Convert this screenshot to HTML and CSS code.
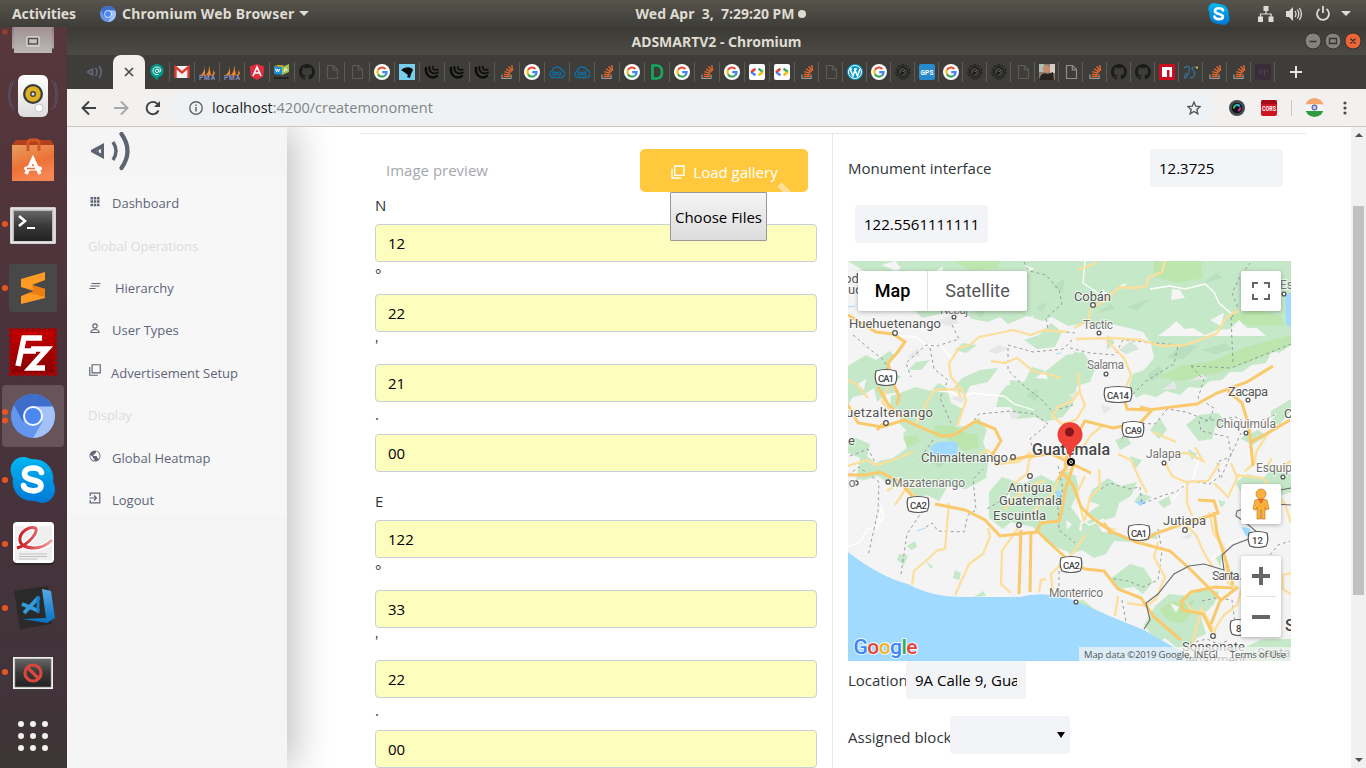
FILE: index.html
```html
<!DOCTYPE html>
<html lang="en">
<head>
<meta charset="utf-8">
<title>ADSMARTV2</title>
<link rel="stylesheet" href="styles.css">
</head>
<body>
<svg class="defs" aria-hidden="true">
  <defs>
    <linearGradient id="skyG" x2="0" y2="1"><stop stop-color="#00b7f0"/><stop offset="1" stop-color="#0078d7"/></linearGradient>
    <linearGradient id="bagG" x2=".4" y2="1"><stop stop-color="#e5a061"/><stop offset=".6" stop-color="#ee7137"/><stop offset="1" stop-color="#f68552"/></linearGradient>
    <linearGradient id="screenG" x2="0" y2="1"><stop stop-color="#666"/><stop offset=".5" stop-color="#383838"/><stop offset="1" stop-color="#222"/></linearGradient>
    <linearGradient id="metalG" x2="0" y2="1"><stop stop-color="#917b80"/><stop offset="1" stop-color="#b5b3b1"/></linearGradient>
    <linearGradient id="redG" x2="0" y2="1"><stop stop-color="#c80000"/><stop offset="1" stop-color="#850000"/></linearGradient>
    <linearGradient id="paperG" x2="0" y2="1"><stop stop-color="#fff"/><stop offset="1" stop-color="#ddd"/></linearGradient>
    <linearGradient id="codeG" x2="0" y2="1"><stop stop-color="#56a9e8"/><stop offset="1" stop-color="#0871c0"/></linearGradient>
    <linearGradient id="ribbonG"><stop stop-color="#c8141c"/><stop offset="1" stop-color="#f3a0a4"/></linearGradient>
    <clipPath id="roundClip"><circle cx="8" cy="8" r="8"/></clipPath>
  </defs>
  <symbol id="google" viewBox="0 0 16 16"><circle cx="8" cy="8" r="8" fill="#fff"/><g fill="none" stroke-width="2.2"><path d="M11.3 4.9A4.6 4.6 0 0 0 4 5.8" stroke="#ea4335"/><path d="M4 5.8A4.6 4.6 0 0 0 4 10.2" stroke="#fbbc05"/><path d="M4 10.2A4.6 4.6 0 0 0 11 11.5" stroke="#34a853"/><path d="M11 11.5A4.6 4.6 0 0 0 12.6 8.2H8.2" stroke="#4285f4"/></g></symbol>
  <symbol id="stack" viewBox="0 0 16 16"><path d="M3 10.5v4h9v-4" fill="none" stroke="#9a9b9e" stroke-width="1.2"/><path d="M4.7 12.6h6M4.8 10.3l6 .7M5.4 7.6l5.8 1.8M7.2 4.7l4.9 3.4M9.7 2.3l3.4 4.9M12.8 1l.7 5.5" stroke="#f0692b" stroke-width="1.3"/></symbol>
  <symbol id="doc" viewBox="0 0 16 16"><path d="M3.5 1.5h6l4 4v9h-10zM9.3 1.8v4h4" fill="none" stroke="currentColor" stroke-width="1.2"/></symbol>
  <symbol id="github" viewBox="0 0 16 16"><path d="M8 0C3.58 0 0 3.58 0 8c0 3.54 2.29 6.53 5.47 7.59.4.07.55-.17.55-.38v-1.49c-2.2.5-2.7-.94-2.7-.94-.36-.91-.89-1.15-.89-1.15-.7-.5.06-.49.06-.49.8.06 1.2.82 1.2.82.72 1.22 1.88.87 2.34.66.07-.52.28-.87.5-1.07C4.76 11.3 2.9 10.6 2.9 7.6c0-.87.31-1.59.82-2.15-.08-.2-.36-1.01.08-2.12 0 0 .67-.21 2.2.82a7.6 7.6 0 0 1 4 0c1.53-1.03 2.2-.82 2.2-.82.44 1.11.16 1.92.08 2.12.51.56.82 1.28.82 2.15 0 3-1.87 3.7-3.65 3.9.29.25.54.73.54 1.48v2.2c0 .22.14.46.55.38A8 8 0 0 0 8 0z" fill="#1b1b1b"/></symbol>
  <symbol id="sails" viewBox="0 0 16 16"><path d="M6 0c0 5-1 8-4 11h4zM10 1c0 4 0 7-3 10h5zM13 3c2 3 2 6 0 8h2l1-2z" fill="#f08a31"/><path d="M1 11.2h13" stroke="#c56928"/><text x="0" y="16" font-size="6.5" font-weight="700" fill="#8490c6" textLength="16">PMA</text></symbol>
  <symbol id="cloud" viewBox="0 0 16 16"><path d="M4 13.5a3.4 3.4 0 0 1-.7-6.6A5 5 0 0 1 12.8 6a3.8 3.8 0 0 1-.5 7.5z" fill="none" stroke="#126da3" stroke-width="1.4"/><path d="M7.8 9.5c-2-2.4-4-1.6-4 0s2 2.4 4 0 4-1.6 4 0-2 2.4-4 0" fill="none" stroke="#126da3" stroke-width="1.3"/></symbol>
  <symbol id="swirl" viewBox="0 0 16 16"><g fill="none" stroke="#0c0c0c" stroke-linecap="round"><path d="M2 4c-1 7 5 12 11 8" stroke-width="2.4"/><path d="M5.5 3c-1 5 3.5 8 8.5 5.5" stroke-width="1.8"/><path d="M9 2.5c-.8 2.7 2 4.5 4.8 3" stroke-width="1.5"/></g></symbol>
  <symbol id="code" viewBox="0 0 16 16"><rect width="16" height="16" rx="2" fill="#fff"/><g fill="none" stroke-width="2.4"><path d="M6.5 4.8L3.7 6.8" stroke="#ea4335"/><path d="M2 8l4.5 3.2" stroke="#4285f4"/><path d="M2 8l3-2" stroke="#ea4335"/><path d="M9.5 4.8L14 8" stroke="#34a853"/><path d="M14 8l-4.5 3.2" stroke="#fbbc05"/></g></symbol>
  <symbol id="compass" viewBox="0 0 16 16"><g fill="none" stroke="#111"><circle cx="8" cy="8" r="7" stroke-dasharray="2 .9"/><circle cx="8" cy="8" r="5"/></g><path d="M11.5 4L8.8 9 4.5 12l3-5z" fill="#111"/><path d="M8 8l2-2" stroke="#777"/></symbol>
  <symbol id="copy" viewBox="0 0 24 24"><path d="M3 7v14h14M7 3h14v14H7z" fill="none" stroke="currentColor" stroke-width="2"/></symbol>
  <symbol id="skype" viewBox="0 0 46 46"><path d="M13 0C18 0 19 2 23 2c14 0 22 11 20 23 5 9 0 20-10 21-4 0-6-2-10-2C9 44 1 33 3 21-3 11 3 0 13 0z" fill="url(#skyG)"/><path d="M31.500 15.500C30 9.500 15 9 14.500 16.500 14 25 31.500 21 31 29c-.5 7-16 6-17.500-.5" fill="none" stroke="#fff" stroke-width="5.600" stroke-linecap="round"/></symbol>
  <symbol id="chromium" viewBox="0 0 44 44"><circle cx="22" cy="22" r="22" fill="#6396ee"/><path d="M3 11a22 22 0 0 1 38 0l1 2H22L12 28z" fill="#3f6dcc"/><path d="M22 12.500h19.800A22 22 0 0 1 22 44l9.500-16z" fill="#a3c3f8"/><circle cx="22" cy="22" r="10" fill="#f4f7ff"/><circle cx="22" cy="22" r="8" fill="#4a88ef"/></symbol>
</svg>

<header class="topbar">
  <div class="top-left"><span class="activities">Activities</span><svg width="16" height="16"><use href="#chromium"/></svg><span class="app-name">Chromium Web Browser</span><i class="caret"></i></div>
  <div class="clock"><span>Wed Apr&nbsp; 3,&nbsp; 7:29:20 PM</span><i class="clock-dot"></i></div>
  <div class="tray">
    <svg class="tray-skype" width="22" height="22"><use href="#skype"/></svg>
    <svg class="tray-net" width="16" height="16" viewBox="0 0 16 16" fill="#dedbd5"><path d="M5.500 0h5v5h-5zM0 10.500h5V16H0zM10.500 10.500h5V16h-5z"/><path d="M8 5v3M2.500 11V8h10.600v3" fill="none" stroke="#dedbd5" stroke-width="1.2"/></svg>
    <svg class="tray-vol" width="16" height="16" viewBox="0 0 16 16"><path d="M0 5h3l4-4v14l-4-4H0z" fill="#dedbd5"/><path d="M9 5q2 3 0 6M11.300 3.500q3 4.500 0 9M13.400 2q4 6 0 12" stroke="#dedbd5" stroke-width="1.3" fill="none"/></svg>
    <svg class="tray-power" width="16" height="16" viewBox="0 0 16 16"><path d="M4.500 3a6 6 0 1 0 7 0M8 0v7" fill="none" stroke="#dedbd5" stroke-width="1.800"/></svg>
    <i class="caret"></i>
  </div>
</header>

<div class="desktop">
<nav class="dock">
  <svg class="dock-first" viewBox="0 27 67 37"><circle cx="5" cy="32" r="2.800" fill="#963f2d"/><path d="M12 27h42v22l-2-1v5H14v-5l-2 1z" fill="url(#metalG)"/><path d="M14 27h38v26H14z" fill="#c9c4c4" opacity=".3"/><rect x="26" y="36" width="14" height="11" rx="2" fill="#d0cac8"/><rect x="28.500" y="38.500" width="9" height="5.500" fill="#c7c1c0" stroke="#514b4c" stroke-width="1.400"/></svg>
  <svg viewBox="0 0 67 64"><g fill="none" stroke="#5b6a99" opacity=".55"><path d="M14 16q-8 15 0 30M11 18q-5 13 0 26M52 16q8 15 0 30M55 18q5 13 0 26"/></g><rect x="18" y="11" width="30" height="42" rx="6" fill="url(#paperG)"/><circle cx="33" cy="30" r="10" fill="#3b3b3b"/><circle cx="33" cy="30" r="7.700" fill="#dfb222"/><circle cx="33" cy="30" r="3" fill="#444"/><circle cx="33" cy="30" r="1.500" fill="#ddd"/><circle cx="39" cy="44" r="4" fill="#fff" stroke="#c7c7c7"/></svg>
  <svg viewBox="0 0 67 64"><path d="M12 17l4-5h35l3 5z" fill="#b3401c"/><path d="M12 17h42v36H12z" fill="url(#bagG)"/><path d="M28 23v-8q0-3 3-3h5q3 0 3 3v8" fill="none" stroke="#d35522" stroke-width="3"/><path d="M26 46l7-15 7 15M27 40h12" fill="none" stroke="#fff" stroke-width="3.600"/><rect x="24" y="38.500" width="18" height="4" rx="2" fill="#fff"/><path d="M27 40.500h8" stroke="#ef6b2e" stroke-width="1.500"/></svg>
  <svg viewBox="0 0 67 64"><circle cx="5" cy="32" r="3" fill="#e95420"/><rect x="10" y="15" width="46" height="37" rx="1.500" fill="#bcbcbc"/><rect x="11.500" y="16.500" width="43" height="34" fill="none" stroke="#e4e4e4" stroke-width="2"/><rect x="14" y="19" width="38" height="30" fill="url(#screenG)"/><path d="M19 24l6 5-6 5" fill="none" stroke="#fff" stroke-width="2.500"/><path d="M27 36h8" stroke="#fff" stroke-width="2"/></svg>
  <svg viewBox="0 0 67 64"><circle cx="5" cy="32" r="3" fill="#e95420"/><rect x="9" y="8" width="48" height="48" rx="3" fill="#484848"/><path d="M45 16v8l-13 5 13 4v9L21 48v-8l13-5-13-4v-8z" fill="#ff9a24"/><path d="M32 29l13 4v8L29 37l5-2z" fill="#ea7e12"/></svg>
  <svg viewBox="0 0 67 64"><rect x="11" y="10" width="44" height="44" fill="url(#redG)"/><rect x="11" y="10" width="44" height="44" fill="none" stroke="#ad0000" stroke-width="4.500" stroke-dasharray="0 5.500" stroke-linecap="round"/><path d="M18 46l6-28h18M21 31h15M31 29h16L30 48h15" fill="none" stroke="#fff" stroke-width="5.500"/></svg>
  <svg viewBox="0 0 67 64"><rect x="2" y="1" width="62" height="62" rx="4" fill="#66545a"/><circle cx="5" cy="28" r="3" fill="#e95420"/><circle cx="5" cy="36.500" r="3" fill="#e95420"/><use href="#chromium" x="11" y="10" width="44" height="44"/></svg>
  <svg viewBox="0 0 67 64"><circle cx="5" cy="32" r="3" fill="#e95420"/><use href="#skype" x="10" y="9" width="46" height="46"/></svg>
  <svg viewBox="0 0 67 64"><circle cx="5" cy="32" r="3" fill="#e95420"/><rect x="13" y="11" width="41" height="42" rx="4" fill="#292326"/><rect x="13" y="10" width="41" height="41" rx="4" fill="#fff"/><path d="M15 14h37v34H15z" fill="#efefef"/><path d="M17 36c12-3 23-18 18-20s-14 3-15 10 6 10 14 10 14-4 18-8" fill="none" stroke="#fff" stroke-width="6"/><path d="M17 36c12-3 23-18 18-20s-14 3-15 10 6 10 14 10 14-4 18-8" fill="none" stroke="url(#ribbonG)" stroke-width="3"/><path d="M19 42h28M19 44.500h28M19 47h18" stroke="#c2c2c2"/></svg>
  <svg viewBox="0 0 67 64"><circle cx="5" cy="32" r="3" fill="#e95420"/><path d="M14 15l34-5 4 38-32 5z" fill="#2a2a2b"/><path d="M42 13l9 2 4 27-8 5-25-4 24-1z" fill="url(#codeG)"/><path d="M22 28l17 7M24 37l15-16" stroke="#329bdd" stroke-width="4"/><path d="M38 20v17" stroke="#137fc8" stroke-width="3"/></svg>
  <svg viewBox="0 0 67 64"><circle cx="5" cy="32" r="3" fill="#e95420"/><rect x="13" y="17" width="40" height="32" fill="#efefed"/><rect x="15" y="19" width="36" height="28" fill="url(#screenG)" stroke="#777" stroke-width=".7"/><g fill="none" stroke="#d9473e" stroke-width="3.200"><circle cx="33" cy="33" r="8"/><path d="M27.500 27.500l11 11"/></g></svg>
  <svg viewBox="0 0 67 64" fill="#f2f1f0"><circle cx="21" cy="20" r="3"/><circle cx="33" cy="20" r="3"/><circle cx="45" cy="20" r="3"/><circle cx="21" cy="32" r="3"/><circle cx="33" cy="32" r="3"/><circle cx="45" cy="32" r="3"/><circle cx="21" cy="44" r="3"/><circle cx="33" cy="44" r="3"/><circle cx="45" cy="44" r="3"/></svg>
</nav>

<section class="window">
  <div class="titlebar"><span class="title">ADSMARTV2 - Chromium</span>
    <svg class="winbtns" width="58" height="20" viewBox="0 0 58 20"><circle cx="9" cy="10" r="8" fill="#85837d" stroke="#33322e"/><circle cx="29" cy="10" r="8" fill="#85837d" stroke="#33322e"/><circle cx="49" cy="10" r="8" fill="#ed6536" stroke="#33322e"/><path d="M5.500 10.500h7M25.500 7.500h7v5h-7zM46.500 7.500l5 5m0-5l-5 5" fill="none" stroke="#343331" stroke-width="1.300"/></svg>
  </div>
  <div class="tabs">
    <div class="tab first"><svg width="18" height="16" viewBox="0 0 18 16" fill="none" stroke="#626978" stroke-width="1.600"><path d="M6.500 5v6L1.500 8zM9.500 4q3 4 0 8M13 2q4.500 6 0 12"/></svg></div>
    <div class="tab active"><svg width="10" height="10" viewBox="0 0 10 10"><path d="M1 1l8 8m0-8L1 9" stroke="#4b4b4b" stroke-width="1.700"/></svg></div>
    <div class="tab"><svg viewBox="0 0 16 16"><path d="M8 0a6.800 6.800 0 0 1 1 13.500V16C5 14 1.200 11 1.200 6.800A6.800 6.800 0 0 1 8 0z" fill="#009688"/><circle cx="8" cy="6.800" r="1.700" fill="none" stroke="#fff"/><path d="M9.700 5v2q.2 1.800 1.500.8C13 5 10 2.800 8 3 4 3 3 7 5 9.500q2 2 4.500.8" fill="none" stroke="#fff"/></svg></div>
    <div class="tab"><svg viewBox="0 0 16 16"><path d="M1 2h14v12H1z" fill="#f2f2f2"/><path d="M1.500 14V3L8 8.500 14.500 3v11" fill="none" stroke="#db3c31" stroke-width="2.400"/></svg></div>
    <div class="tab"><svg><use href="#sails"/></svg></div>
    <div class="tab"><svg><use href="#sails"/></svg></div>
    <div class="tab"><svg viewBox="0 0 16 16"><path d="M8 0l7.300 2.500-1 10L8 16l-6.300-3.500-1-10z" fill="#e02c3c"/><path d="M4 12l4-9 4 9M5.600 9h4.800" fill="none" stroke="#fff" stroke-width="1.700"/></svg></div>
    <div class="tab"><svg viewBox="0 0 16 16"><path d="M0 2l8 1v8l-8-1z" fill="#218dd1"/><path d="M8 3l7-3v8l-7 3z" fill="#9cc44f"/><path d="M0 2l5-1 5 .5-2 1.500z" fill="#e7bb34"/><path d="M1.500 4.500l1 3 1-2.500 1 3 1-3" fill="none" stroke="#fff"/><path d="M10 8l1.500-4L13 7" fill="none" stroke="#fff"/><path d="M0 14h15" stroke="#1f1f1f" stroke-width="2" stroke-dasharray="2 .5"/></svg></div>
    <div class="tab"><svg><use href="#github"/></svg></div>
    <div class="tab dim"><svg><use href="#doc"/></svg></div>
    <div class="tab dim"><svg><use href="#doc"/></svg></div>
    <div class="tab"><svg><use href="#google"/></svg></div>
    <div class="tab"><svg viewBox="0 0 16 16"><path d="M0 0h16v16H0z" fill="#76cdec"/><path d="M2 6l3-2q7-2 9 2l-2 4-1 4-3-1 1-2-4-3z" fill="#0b0c0d"/></svg></div>
    <div class="tab"><svg><use href="#swirl"/></svg></div>
    <div class="tab"><svg><use href="#swirl"/></svg></div>
    <div class="tab"><svg><use href="#swirl"/></svg></div>
    <div class="tab"><svg><use href="#stack"/></svg></div>
    <div class="tab"><svg><use href="#google"/></svg></div>
    <div class="tab"><svg><use href="#cloud"/></svg></div>
    <div class="tab"><svg><use href="#cloud"/></svg></div>
    <div class="tab"><svg><use href="#stack"/></svg></div>
    <div class="tab"><svg><use href="#google"/></svg></div>
    <div class="tab"><svg viewBox="0 0 16 16"><path d="M3.500 1.500H8q5 .5 5 6.500t-5 6.500H3.500z" fill="none" stroke="#19a75f" stroke-width="2.700"/></svg></div>
    <div class="tab"><svg><use href="#google"/></svg></div>
    <div class="tab"><svg><use href="#stack"/></svg></div>
    <div class="tab"><svg><use href="#google"/></svg></div>
    <div class="tab"><svg><use href="#code"/></svg></div>
    <div class="tab"><svg><use href="#code"/></svg></div>
    <div class="tab small"><svg><use href="#stack"/></svg></div>
    <div class="tab small dim"><svg><use href="#doc"/></svg></div>
    <div class="tab small"><svg viewBox="0 0 16 16"><circle cx="8" cy="8" r="8" fill="#0999c7"/><circle cx="8" cy="8" r="6.500" fill="none" stroke="#fff"/><path d="M3 5l3 7 2-6 2.500 6L13 5M3 5h2M7 5h3" fill="none" stroke="#fff" stroke-width="1.500"/></svg></div>
    <div class="tab small"><svg><use href="#google"/></svg></div>
    <div class="tab small"><svg><use href="#compass"/></svg></div>
    <div class="tab small"><svg viewBox="0 0 16 16"><rect width="16" height="16" rx="2" fill="#278bcb"/><text x="1.500" y="10.500" font-size="6.500" font-weight="700" fill="#fff" textLength="13">GPS</text></svg></div>
    <div class="tab small"><svg><use href="#google"/></svg></div>
    <div class="tab small"><svg><use href="#compass"/></svg></div>
    <div class="tab small"><svg><use href="#compass"/></svg></div>
    <div class="tab small dim"><svg><use href="#doc"/></svg></div>
    <div class="tab small"><svg viewBox="0 0 16 16"><path d="M0 0h16v16H0z" fill="#8a7a6b"/><path d="M0 0h5v8H0z" fill="#a9c0b3"/><path d="M11 0h5v9h-5z" fill="#d6cfc6"/><circle cx="7.500" cy="5" r="3.700" fill="#cb8a6b"/><path d="M0 16q2-9 9-6l5-2 1 8z" fill="#292320"/></svg></div>
    <div class="tab small light"><svg><use href="#doc"/></svg></div>
    <div class="tab small"><svg><use href="#stack"/></svg></div>
    <div class="tab small"><svg><use href="#github"/></svg></div>
    <div class="tab small"><svg><use href="#github"/></svg></div>
    <div class="tab small"><svg viewBox="0 0 16 16"><path d="M0 0h16v16H0z" fill="#cc0d20"/><path d="M3 3h10v10h-2.500V6H8v7H3z" fill="#fff"/></svg></div>
    <div class="tab small"><svg viewBox="0 0 16 16" fill="none" stroke="#3a6f92" stroke-width="1.300"><path d="M1 4q3-3 5-1c2 2-2 11-4 11q-2-1 2-5M14 4q-5-2-5 1 4 3 2 7-2 3-4 1"/><path d="M13 3.500h2" stroke="#e4b33c" stroke-width="2"/></svg></div>
    <div class="tab small"><svg><use href="#stack"/></svg></div>
    <div class="tab small"><svg><use href="#stack"/></svg></div>
    <div class="tab small"><svg viewBox="0 0 16 16"><rect width="16" height="16" rx="2" fill="#3a2c39"/><path d="M4.500 5v5M7 5v5M9.500 5v7M12 5v4" stroke="#514151"/></svg></div>
    <svg class="newtab" width="12" height="12" viewBox="0 0 12 12"><path d="M6 0v12M0 6h12" stroke="#e8e6e3" stroke-width="2"/></svg>
  </div>
  <div class="toolbar">
    <svg class="navbtn" width="16" height="16" viewBox="0 0 16 16"><path d="M15 8H2M8 1.500L1.500 8 8 14.500" fill="none" stroke="#3f4043" stroke-width="1.900"/></svg>
    <svg class="navbtn" width="16" height="16" viewBox="0 0 16 16"><path d="M1 8h13M8 1.500L14.500 8 8 14.500" fill="none" stroke="#a6a6a6" stroke-width="1.900"/></svg>
    <svg class="navbtn" width="16" height="16" viewBox="0 0 16 16"><path d="M13.500 10.500A6.200 6.200 0 1 1 12.500 4L14 5.500" fill="none" stroke="#3f4043" stroke-width="1.900"/><path d="M15 1v6H9z" fill="#3f4043"/></svg>
    <div class="omnibox">
      <svg width="14" height="14" viewBox="0 0 14 14"><circle cx="7" cy="7" r="6.200" fill="none" stroke="#5f6368" stroke-width="1.400"/><path d="M7 6v4.500M7 3.400V5" stroke="#5f6368" stroke-width="1.500"/></svg>
      <span class="url"><b>localhost</b>:4200/createmonoment</span>
      <svg class="star" width="14" height="14" viewBox="0 0 14 14"><path d="M7 1l1.700 4.200 4.600.3-3.500 3 1.100 4.400L7 10.500l-3.900 2.400 1.100-4.400-3.500-3 4.600-.3z" fill="none" stroke="#505256" stroke-width="1.300"/></svg>
    </div>
    <svg class="ext1" width="16" height="16" viewBox="0 0 16 16"><circle cx="8" cy="8" r="8" fill="#454a50"/><circle cx="8" cy="8" r="5.200" fill="#111"/><g fill="none" stroke-width="2"><path d="M5 8.500A3 3 0 0 1 7 5.200" stroke="#28c26b"/><path d="M7 5.200a3 3 0 0 1 3.700 1.200" stroke="#26b7dd"/><path d="M11 7.500a3 3 0 0 1-2 3.400" stroke="#d42ea4"/></g></svg>
    <svg class="ext2" width="16" height="16" viewBox="0 0 16 16"><rect width="16" height="16" rx="2" fill="#cf1422"/><path d="M0 2q0-2 2-2h12q2 0 2 2v2H0z" fill="#a70b17"/><text x="1" y="11" font-size="7" font-weight="700" fill="#fff" textLength="14" lengthAdjust="spacingAndGlyphs">CORS</text></svg>
    <i class="sep"></i>
    <svg class="flag" width="19" height="19" viewBox="0 0 16 16"><g clip-path="url(#roundClip)"><path d="M0 0h16v6H0z" fill="#f5a46a"/><path d="M0 5.300h16v5.600H0z" fill="#f4f4f4"/><path d="M0 10.900h16V16H0z" fill="#2e9b41"/></g><circle cx="8" cy="8" r="2" fill="#c3c8e3" stroke="#5b6bb0"/></svg>
    <svg class="kebab" width="4" height="14" viewBox="0 0 4 14" fill="#4a4b4e"><circle cx="2" cy="2" r="1.600"/><circle cx="2" cy="7" r="1.600"/><circle cx="2" cy="12" r="1.600"/></svg>
  </div>

  <div class="page">
    <aside class="sidebar">
      <div class="brand"><svg width="40" height="40" viewBox="0 0 40 40" fill="none" stroke="#5c6470"><path d="M14 11v16L1 20v-2z" fill="#5c6470" stroke="none"/><path d="M11 17v4.500L6.500 19z" fill="#f5f5f5" stroke="none"/><path d="M8 15v8" stroke="#5c6470" stroke-width="1.400"/><path d="M23 10q6 9 0 18" stroke-width="3.400"/><path d="M31.500 2q12 17 0 34" stroke-width="4.200" stroke-linecap="round"/></svg></div>
      <ul class="menu">
        <li><svg viewBox="0 0 12 12"><path d="M1.500 3.200h9M1.500 6.600h9M1.500 10h9" stroke="#5f6577" stroke-width="2.500" stroke-dasharray="2.500 .75"/></svg><span>Dashboard</span></li>
        <li class="head"><span>Global Operations</span></li>
        <li class="hier"><svg viewBox="0 0 12 12" stroke="#5f6577" stroke-width="1.200"><path d="M2.500 3.500h9M1.500 6h9M.5 8.500h6"/></svg><span>Hierarchy</span></li>
        <li class="user"><svg viewBox="0 0 12 12" stroke="#5f6577" stroke-width="1.200" fill="none"><circle cx="6" cy="4" r="2.200"/><path d="M2 10.500q0-3 4-3t4 3z"/></svg><span>User Types</span></li>
        <li class="adv"><svg class="big"><use href="#copy"/></svg><span>Advertisement Setup</span></li>
        <li class="head disp"><span>Display</span></li>
        <li class="heat"><svg viewBox="0 0 12 12"><circle cx="6" cy="6" r="5.500" fill="#5f6577"/><path d="M1.500 5l2.500 2v1l1.500 1.500v1.300A5 5 0 0 1 1.400 5zM7 1.300V3L5.500 3.500v1.200H4L4.500 6h3l1 1.500.3 1.300h1A5 5 0 0 0 7 1.300z" fill="#f7f7f7"/></svg><span>Global Heatmap</span></li>
        <li class="out"><svg viewBox="0 0 12 12" fill="none" stroke="#5f6577" stroke-width="1.200"><path d="M1.200 4V1.200h9.600v9.600H1.200V8M.5 6h6.800M5 3.500L7.500 6 5 8.500"/></svg><span>Logout</span></li>
      </ul>
    </aside>
    <main class="content">
      <div class="left-col">
        <div class="preview-row">
          <span class="preview">Image preview</span>
          <div class="upload">
            <button class="load"><svg width="16" height="16"><use href="#copy"/></svg><span>Load gallery</span><i class="stripe"></i></button>
            <button class="choose">Choose Files</button>
          </div>
        </div>
        <div class="label-n">N</div>
        <input class="field" value="12">
        <div class="mark">°</div>
        <input class="field" value="22">
        <div class="mark">'</div>
        <input class="field" value="21">
        <div class="mark">.</div>
        <input class="field" value="00">
        <div class="label-e">E</div>
        <input class="field" value="122">
        <div class="mark">°</div>
        <input class="field" value="33">
        <div class="mark">'</div>
        <input class="field" value="22">
        <div class="mark">.</div>
        <input class="field" value="00">
      </div>
      <div class="right-col">
        <div class="mon-row"><label class="mon">Monument interface</label><input class="grey lat" value="12.3725"></div>
        <input class="grey lng" value="122.5561111111">
        <div class="map">
          <svg class="map-art" width="443" height="400" viewBox="848 261 443 400">
            <path d="M848 261h443v400H848z" fill="#f4f4f4"/>
            <g fill="#c5e8c8">
              <path d="M848 261h443v84l-12 8-7-2-6 12-14 2-10 7-12 0-8 8-12 1-9 7-12-1-9 8-14-4-10 6-12-3-8 4-7-12 4-12 11-4 10-12-3-14-8-12-14-4-18-4-8 5-17-6-18 3-16-9-9 4-16-5-19 8-8-7-12 5-16-3-10-8-18 2-22 5-8-8-18-8-14-20z"/>
              <path d="M848 366l18-11 10 5 14-9 5 5-7 10 4 9 9 1-7 8 5 8-13 2-9 8-3-14-11 7-10 2-5 8zM848 440l8-2 14 6-3 12 9 8-6 14-14 2 4-22-12-5z"/>
              <path d="M891 396l25-9 14 4 9-8 8 5 4 15 12 6-4 14-12 10-13-4-15 8-12-6-9-9 9-8-17-8zM903 432l26-8 14 3 22-1 14-8 8 12-4 12 6 16-3 20-20 11-18-3-9 15-12-6-13 6-6-14-18-2-12-9-17 5 8-11 10-9 14-3 14-10z"/>
              <path d="M952 390l10-12 18-8 18-2-10 14-18 4-4 8zM999 395l12-15 13 2 8-15 14 4 20-16 17-3 12 17-5 13-13 4-4 18-10 13-18 5-10-5-18 2-6-12-15 0zM1024 340l15-5 12-12 11 9-7 15-18 2z"/>
              <path d="M989 492l13-15 21 7 18-9 13 7 10-12 12 6 3 15-8 16 10 14-4 16-12 14-18-8-14-16-22-5-8 7-14-11z"/>
              <path d="M1060 534l10-10 13 8 4 17-17 5-10-9zM1092 490l16-12 12 8 17-4-6 14-12 7-4 14-15 4-12-8 12-8-12-4zM1082 524l12-6 8 14 18 1 11 9-17-1-8 13-12 4-12-8zM1118 573l12-9 14 4 9 14-10 12-9-7-15 2-9-10zM1140 493l12 4-10 7-8-2z"/>
              <path d="M1155 606l14-12 19 2 16-8 15 4-5 12-13 13 5 17-9 4-8 11-12-1-12-10-7 5-14-18zM1242 649l20-10 29 0v22h-53zM1235 483l12-9 16 4 9-9 19 5v18l-18 6-15-3-13 2zM1271 411l20-12v12l-12 14-8-3zM1186 425l13-10 19-2 10 11-13 3-3 12-13 2zM1150 430l10-12 7 12-8 9zM1240 438l18-8 9 6-15 9z"/>
              <path d="M907 546l8-5 2 6-6 3zM899 554l9 1-4 10-7-5zM955 570l6 3-2 7-6-2zM974 597l9-6 3 5zM925 560l8 7-2 2zM1158 502l11-6 2 8-7 4zM1218 500l8 2-5 6zM1216 558l7-5-3 14z"/>
              <path d="M1145 538l10-7 3 8zM1115 440l12-4 4 8-11 6zM1130 456l12 4-7 10zM1188 449l9 5-5 6zM1107 335l8 7-8 8zM1074 351l9 4-8 9zM908 370l8-8 14-2-9 10zM955 350l8-7 14 2-11 8zM920 402l9-5 5 9z"/>
            </g>
            <g fill="#b9e6a6" opacity=".75">
              <path d="M1154 261h47l2 17-24 5-25-6zM1158 377l25-12 30-4 32-14 46-12v10l-46 19-28 9-36 8zM1230 315l27-5 24 6 3 9-31 1-23-5zM1159 610l12-9 15 2 5 11-8 9-12-1zM935 425l19 1 14 8 10 0v14l-13 3-17-12-13-2zM955 261h45l-3 7-27 3zM903 437l13-2 4 6-13 7zM1070 602l13-2 14 11-10-1z"/>
            </g>
            <g fill="#f5f5f5">
              <path d="M1158 336l12-9 6-6 9 8 8-1 12 7 12-5 13-1 9-9 8 8 10 0 9 8zM882 265l13-4 6 7-5 3zM862 271l16 9-3 7-12-5zM935 272l8-6-2 13zM1172 289l8 1 5 8-14 2zM1025 265l10 4-7 2zM1210 320l14-7-3 13zM1027 320l6-5-1 12zM1120 285l7-2-4 6z"/>
              <path d="M858 384l8-5-2 11zM1035 378l10-7 3 8zM999 385l10-10 1 10zM890 484l8-7 5 8zM1100 528l7-4 2 8zM1170 603l9 4-3 6zM1001 500l8-8 2 9zM1243 489l11-4-1 7zM1066 520l6 4-5 6z"/>
            </g>
            <g fill="#a9d7b4" opacity=".45"><path d="M862 291l18-5 8 7-13 4zM905 289l20-12 10 2-20 14zM986 300l9-10 14-1-8 10zM1011 283l19-9-8 14zM1096 313l15-9 4 5zM1127 307l22-8-12 12zM1119 350l12-9 8 8-13 5zM1166 358l18-14 14 2-15 13zM1202 350l22-7 9 6-18 5zM1148 374l11-8 4 8-12 7zM972 309l14 2-5 7zM1203 283l14-10 6 5zM1235 285l15-6 8 9zM1052 287l13-9-2 14zM950 285l11-7 4 6zM1035 308l12-6-5 10zM930 462l17-3-7 9zM1026 395l12-6-2 13zM1180 603l15-3-5 8z"/></g>
            <g fill="#e6e8e7"><path d="M938 320l16-5 5 8-12 3zM906 358l12-10 2 8zM988 351l10-6 11 3-12 6zM950 398l19-4-7 9zM1008 410l13 5-9 5zM1068 395l11-4-3 9zM1162 390l12-9 3 8zM1190 381l12-7 6 5zM1180 538l14-6-4 7zM1100 404l12 4-8 6z"/></g>
            <g fill="#a0daff">
              <path d="M848 552q32 25 60 32 25 14 60 13h52q25-7 56 4 34 16 68 29l54 31H848z"/>
              <path d="M930 447l8-5 16-1 4 4-1 9-8 4-7-3-10 2zM1285 295l6-3v36l-5-4zM1136 502l6-3 4 4-6 3zM1241 527l8 1 4 7-7 1zM1055 491l5 0 2 6-4 3z"/>
              <path d="M848 307l7-1M1056 354l5-1M917 531l8-3" stroke="#a0daff" fill="none"/>
            </g>
            <g fill="none" stroke="#fff" stroke-width="1.300">
              <path d="M900 336l16 1 10 8 14 0 11 13M932 390l18 2 13 5 10-4 16 2 15 1 10 8 20 6M848 547l12-5 7-13 11-1 3-20M1085 261l-2 22 15 10 9 0M1150 289l20-3 15 3 20-5 9 8 5 11 14 12M1266 425l10-11M1077 495l3 22 9 8 15-6M1127 540l8-9M1172 500l15-17 6-4 6-20M1211 560l12-12 20-11M881 505l3 12-8 9"/>
            </g>
            <g fill="none" stroke="#8e9394" stroke-width=".9" stroke-dasharray="3 3">
              <path d="M1024 262l5 9 17 4 13 15 3 14-16 14 2 12 27 3M952 325l7 14-22 7-11-1-20 18 5 14M930 348l4 21 14 11-8 18 11 25M853 335l19 16 12 9 7 19M1008 345l25 7 30-3 9-9M1008 348v22l14 14 20 16 10 11 21-6M970 425l9-11 32-3 23 3 14 10-18 15 5 20M850 456l18-7 8 15M848 475l11-8 20 15-1 29-10 45M933 440l-14 20M901 574l6-40 18-27-8-4M926 527l6-4 6 8 26 1 4-17 8-5-3-31 10-10M1012 488l-8 11-19 11M1058 466l5 23-5 18 1 23 16 13M1059 565v28"/>
              <path d="M1070 348l20 5 25 2 8-15 55 5-4 19-28 17-21 21M1191 366l40 2 20-8 40-16M1191 366l13 14-6 18 16 10-5 13-23-9-19-3-12 15-25-1-10 19M1231 317l2 47M1232 317l6-9-6-15 8-16 10-14M1199 421l2 10 27 6 3 17-10 24M1205 421l31-4 14 8 25-10M1101 489l9-6 19 6 11-2 2 17 22-9 12-3 15-11 19 3 10-8-3-14 13-5 11-24M1158 529l4 22-4 29-15 7-15-6-20-3M1122 600l4 22M1202 601l14-3 16 2 4 31M1270 555l8-10 12-4M1190 643l17-4 11 5 9-3"/>
            </g>
            <g fill="none" stroke="#fcdf9c" stroke-width="2.300">
              <path d="M1078 270l18-7M1165 261l-3 11-14 6-1 7-10 3-17-1-20 17-8 1-4 16-14 7M1076 339l37-1 28 2 20 6 24-1 20-7 12-5 9-15 12-8M1106 340l18 18 7 17-6 15-11 8M1067 332l-23-2-13 5-18-5-14 3-20 4-9 8-11 3-10 15 2 14 12 14 3 10-9 25M934 390l23-1 4 9M934 390l-15 27-3 9M991 361l14 2 12-5 16 13 18 4 10 3M1078 373l2 20 5 12-9 15-14 4-10-8M1052 416l6-9 14-6 8-10M888 387l-6 15 8 8M848 380l8 4 12 14M848 466l19-6 9 5 17-5 20-8M895 505l10-15 13-7M887 491l13-9 15 14M949 503l-4 46-7 1-9 8-15 13-2 14M988 528l2 9-7 17-14 10-14 31M1018 528l-16 23-1 33 10 9M1046 579l-5 1-2 12"/>
              <path d="M979 454l8-4 8 5 3 9 20-2 13-10M1004 510l9-11 23-16 9-2M1028 520l10-14 14-11 9-22 8-4M1053 594l-2-20 22-21 12-18M1043 450l-14 10-2 14-14 10M1085 476l-8 17 7 29M1060 457l23-10 8-12 12-10M1147 493l-8-15-8-18-13-6M1176 442l-23-10M1172 454l15-1 16 8-8-14M1291 461l-13 9-10-5 4-7M1164 460l8 16 14 6 22-1 12-18M1187 482v21l5 13M1231 463l6 15-9 19-14-14M1209 512l5 22 10 14 4 35 8 4M1186 525l10 10 9 20 8 12M1158 542l-4 15 11 20-9 22-10 7M1148 606l-21-3M1118 596l-3 20M1202 607l-13 49M1242 588l-5 17-13 10-9 14 0 10M1213 629l-10-18-10 1-7-10M1291 594l-8-5v-14l8-2M1280 425l-11 7-13 20-1 11-10 8M1235 475l28 3 9 10 13 16 6 19M1085 520l5-23 10-9-1-19M1116 530l-17-5"/>
            </g>
            <g fill="none" stroke="#f9c96b" stroke-width="3">
              <path d="M848 315l28 17 17 2 12 8-8 11-9 10 5 20 6 13-2 9M848 405l10 18 24 4 22-7 16 7 21 9 13-1 22-14 19 8 6 12-9 14 5 11M878 387l10 17 14 14M877 430l8-8M848 475l18 0 14-3 20 10 18 21M935 504l30 6 20 10 15 16 36-4 5-9 18-2 3-12 3-18 8-25M1031 532l-1 60M1021 530l-2 64M1036 530l19 18 18 16 12 5 19 2 14 18 23 9 13 19 27 23M1061 471l12 14 8 22 10 10 21 15 24 10 34 9 20 18 14 14 17 17M1111 534l-7-11M1124 397l3 12 21 1 32-4 17-2 20-11 30-11 26-16M1228 391l14 12 7 23 4 40M1140 407l12 3-12 13-27 5-28-7-17 28-3 17M1145 540l12-7 20-7 32-10 9-3-4-12-16-1M1214 512l3 21 9 28 7 24M1251 442l15-8 24-14M1233 588l-18-1-24 5-10 10 2 8 20 4 9 18M1238 587l-18 14-9 23M1068 462l23 11M1058 480l11-18-18-8-20 2-22 4"/>
            </g>
            <path d="M1144 629l6-9-4-17 12-9 16-20 15-8 15-2 20 6-2-15 11-10 21-8 3-5-12-10-9-6 1-5 12-4 4-17M1291 488l-16 3v13l16 1" fill="none" stroke="#68696a" stroke-width="1.100"/>
            <g fill="#fff" stroke="#555" stroke-width="1.300"><circle cx="895" cy="333" r="2.300"/><circle cx="954" cy="317" r="1.900"/><circle cx="886" cy="423" r="2.300"/><circle cx="1013" cy="457" r="2.300"/><circle cx="888" cy="482" r="2"/><circle cx="856" cy="483" r="2"/><circle cx="1030" cy="476" r="2.300"/><circle cx="1019" cy="525" r="2.300"/><circle cx="1093" cy="305" r="2.300"/><circle cx="1099" cy="333" r="1.900"/><circle cx="1106" cy="374" r="1.900"/><circle cx="1248" cy="400" r="1.900"/><circle cx="1246" cy="433" r="1.900"/><circle cx="1164" cy="463" r="1.900"/><circle cx="1185" cy="530" r="2.300"/><circle cx="1283" cy="477" r="1.900"/><circle cx="1284" cy="294" r="1.900"/><circle cx="1213" cy="636" r="2.300"/><circle cx="1076" cy="602" r="1.900"/></g>
            <g class="shields" fill="#fff" stroke="#555" stroke-width="1.200"><path d="M876 371q10-3 20 0 2 8-1 13-9 3-18 0-3-6-1-13z"/><path d="M1105 388q13-3 26 0 2 8-1 13-12 3-24 0-3-6-1-13z"/><path d="M1123 423q10-3 20 0 2 8-1 13-9 3-18 0-3-6-1-13z"/><path d="M908 498q10-3 20 0 2 8-1 13-9 3-18 0-3-6-1-13z"/><path d="M1061 558q10-3 20 0 2 8-1 13-9 3-18 0-3-6-1-13z"/><path d="M1129 526q10-3 20 0 2 8-1 13-9 3-18 0-3-6-1-13z"/><path d="M1249 533q9-3 18 0 2 8-1 13-8 3-16 0-3-6-1-13z"/><path d="M1231 621q7-3 14 0 2 8-1 13-6 3-12 0-3-6-1-13z"/></g>
            <g class="shield-text"><text x="878" y="381.500" textLength="16">CA1</text><text x="1107" y="398.500" textLength="22">CA14</text><text x="1125" y="433.500" textLength="17">CA9</text><text x="910" y="508.500" textLength="17">CA2</text><text x="1063" y="568.500" textLength="17">CA2</text><text x="1131" y="536.500" textLength="16">CA1</text><text x="1252" y="543.500" textLength="11">12</text><text x="1236" y="631.500">8</text></g>
            <g class="labels">
              <text x="844" y="283">oda</text><text x="848" y="294">uc</text>
              <text x="1074" y="301" textLength="37">Cobán</text><text class="minor" x="1083" y="329" textLength="30">Tactic</text><text class="minor" x="1087" y="369" textLength="37">Salama</text><text x="1228" y="396" textLength="40">Zacapa</text><text class="minor" x="1216" y="428" textLength="60">Chiquimula</text><text x="1284" y="418">C</text><text class="minor" x="1146" y="458" textLength="35">Jalapa</text><text class="minor" x="1256" y="472">Esquipulas</text><text class="minor" x="1280" y="289">Esta</text><text class="minor" x="940" y="314" textLength="28">Nebaj</text>
              <text x="849" y="328" textLength="92">Huehuetenango</text><text x="846" y="417" textLength="87">uetzaltenango</text><text x="848" y="445">e</text><text x="921" y="462" textLength="87">Chimaltenango</text><text class="minor" x="892" y="487" textLength="73">Mazatenango</text><text x="846" y="487" class="minor">jo</text><text x="1008" y="492" textLength="44">Antigua</text><text x="999" y="505" textLength="63">Guatemala</text><text x="993" y="520" textLength="53">Escuintla</text><text class="minor" x="1049" y="597" textLength="54">Monterrico</text><text x="1163" y="525" textLength="43">Jutiapa</text><text x="1212" y="580" textLength="48">Santa Ana</text><text x="1182" y="651" textLength="63">Sonsonate</text><text x="1180" y="664" textLength="66">Department</text><text x="1257" y="657">Santa Te</text><text class="city" x="1272" y="631">n S</text>
              <text class="city" x="1032" y="455" textLength="78">Guatemala</text>
            </g>
            <circle cx="1071" cy="462" r="3" fill="#222" stroke="#000" stroke-width="2"/><circle cx="1071" cy="462" r="1.500" fill="none" stroke="#fff" stroke-width=".8"/>
            <path d="M1070 459q-2-9-7-14a12.500 12.500 0 1 1 14 0q-5 5-7 14z" fill="#ef4038"/><circle cx="1069.500" cy="432" r="4.500" fill="#86151b"/>
            <path d="M1079 647h212v14h-212z" fill="#f5f5f5" opacity=".7"/>
            <g class="logo"><text x="853.500" y="654" textLength="64"><tspan fill="#3b86f4">G</tspan><tspan fill="#e94335">o</tspan><tspan fill="#f3b51c">o</tspan><tspan fill="#3b86f4">g</tspan><tspan fill="#34a853">l</tspan><tspan fill="#e94335">e</tspan></text></g>
            <g class="credit"><text x="1084" y="658" textLength="134">Map data ©2019 Google, INEGI</text><text x="1230" y="658" textLength="56">Terms of Use</text></g>
          </svg>
          <div class="maptype"><span class="on">Map</span><span>Satellite</span></div>
          <div class="ctl full"><svg width="18" height="18" viewBox="0 0 18 18"><path d="M1 6V1h5M12 1h5v5M17 12v5h-5M6 17H1v-5" fill="none" stroke="#666" stroke-width="2"/></svg></div>
          <div class="ctl peg"><svg width="18" height="32" viewBox="0 0 18 32"><path d="M3 12q6-3 12 0l2 9-3 1-1-3v12H9.500v-9h-1v9H5V19l-1 3-3-1z" fill="#fbb03b" stroke="#b86d18" stroke-width=".6"/><circle cx="9" cy="6" r="5" fill="#fbb03b" stroke="#b86d18" stroke-width=".6"/><path d="M6 11h6l-3 5z" fill="#e36b2c"/></svg></div>
          <div class="ctl zoom"><svg width="18" height="18" viewBox="0 0 18 18"><path d="M9 0v18M0 9h18" stroke="#666" stroke-width="4"/></svg><i></i><svg width="18" height="18" viewBox="0 0 18 18"><path d="M0 9h18" stroke="#666" stroke-width="4"/></svg></div>
        </div>
        <div class="loc-row"><label>Location</label><input class="grey" value="9A Calle 9, Guatemala"></div>
        <div class="block-row"><label>Assigned block</label><div class="grey select"><i></i></div></div>
      </div>
    </main>
    <div class="scrollbar"><i class="up"></i><i class="thumb"></i><i class="down"></i></div>
  </div>
</section>
</div>
</body>
</html>
```
FILE: styles.css
```css
* { box-sizing: border-box; }
body { margin: 0; width: 1366px; height: 768px; overflow: hidden; font-family: "Open Sans", "Noto Sans", sans-serif; font-stretch: 88%; font-size: 15px; color: #2f353a; background: #fff; }
svg { display: block; flex: none; }
svg text { font-family: Roboto, sans-serif; font-stretch: normal; }
.defs { position: absolute; width: 0; height: 0; }
i { display: block; flex: none; }

.topbar { height: 27px; display: grid; grid-template-columns: 1fr auto 1fr; align-items: center; background: linear-gradient(#57544c, #3e3d38); color: #dfdbd2; font: 700 14px "Noto Sans", sans-serif; }
.top-left { display: flex; align-items: center; padding-left: 12px; }
.activities { width: 88px; letter-spacing: -.1px; }
.app-name { margin-left: 6px; letter-spacing: .2px; }
.caret { width: 0; height: 0; border: 5px solid transparent; border-top-color: #dfdbd2; border-bottom: 0; margin-left: 4px; }
.clock { display: flex; align-items: center; gap: 4px; transform: translateX(38px); }
.clock-dot { width: 8px; height: 8px; border-radius: 50%; background: #dfdbd2; }
.tray { display: flex; align-items: center; justify-content: flex-end; padding-right: 15px; }
.tray-net { margin-left: 28px; }
.tray-vol { margin-left: 12px; }
.tray-power { margin-left: 13px; }
.tray .caret { margin-left: 10px; }

.desktop { display: flex; height: 741px; }
.dock { width: 67px; flex: none; background: linear-gradient(#57373b, #49323b 50%, #41343a 90%, #3d3535); }
.dock svg { width: 67px; height: 64px; }
.dock .dock-first { height: 37px; }
.window { width: 1299px; flex: none; }

.titlebar { height: 28px; display: flex; align-items: center; position: relative; background: linear-gradient(#3b3a36, #4b4a43); color: #dfdbd2; font: 700 14px "Noto Sans", sans-serif; }
.title { width: 100%; text-align: center; }
.winbtns { position: absolute; right: 4px; top: 4px; }
.tabs { height: 34px; display: flex; align-items: center; background: #3e3d39; padding-left: 10px; }
.tab { width: 25px; height: 20px; display: flex; align-items: center; justify-content: center; border-right: 1px solid #5c5b56; }
.tab svg { width: 16px; height: 16px; }
.tab.small { width: 24px; }
.tab.first { width: 36px; border: 0; }
.tab.first svg { width: 18px; }
.tab.active { width: 32px; height: 34px; border: 0; background: #f2f1f0; border-radius: 8px 8px 0 0; }
.tab.active svg { width: 10px; height: 10px; }
.tab.dim { color: #5b5a57; }
.tab.light { color: #8f8e8b; }
.newtab { margin-left: 15px; }

.toolbar { height: 38px; display: flex; align-items: center; background: #f2f1f0; border-bottom: 1px solid #c9c8c6; padding: 0 19px 0 14px; }
.navbtn { margin-right: 16px; }
.omnibox { width: 1038px; height: 32px; margin-left: 4px; margin-left: -5px; width: 1042px; border-radius: 16px; background: #eef2f4; padding: 0 13px 0 14px; padding-left: 17px; display: flex; align-items: center; }
.url { margin-left: 9px; flex: 1; font-size: 14.5px; color: #808487; }
.url b { font-weight: 400; color: #222; }
.ext1 { margin-left: 15px; }
.ext2 { margin-left: 16px; }
.sep { width: 1px; height: 16px; background: #c8c7c5; margin-left: 14px; }
.flag { margin-left: 13px; }
.kebab { margin-left: auto; }

.page { height: 641px; display: flex; overflow: hidden; }
.sidebar { width: 220px; flex: none; background: #f5f5f5; box-shadow: 8px 0 36px rgba(0,0,0,.25); z-index: 1; }
.brand { height: 48px; padding: 5px 23px; }
.menu { list-style: none; margin: 0; padding: 7px 0 0; height: 340px; background: #f7f7f7; }
.menu li { height: 42.4px; display: flex; align-items: center; padding-left: 21px; font-size: 13px; color: #5f6577; }
.menu svg { width: 12px; height: 12px; margin: -4px 11px 0 1px; }
.menu svg.big { width: 14px; height: 14px; margin: -5px 9px 0 0; }
.menu .hier span { margin-left: 3px; }
.menu .head { color: #dcdcdc; }

.content { width: 946px; flex: none; margin: 6px 45px 0 73px; border-top: 1px solid #e7e8ea; display: flex; }
.left-col { width: 473px; flex: none; border-right: 1px solid #e7e8ea; padding: 15px 15px 0; }
.preview-row { height: 43px; display: flex; justify-content: space-between; padding: 0 9px 0 11px; }
.preview { color: #a5a7ad; line-height: 42px; }
.upload { position: relative; }
button { font: inherit; }
.load { position: relative; overflow: hidden; width: 168px; height: 43px; border: 0; border-radius: 5px; background: #ffc83d; color: #fff; display: flex; align-items: center; justify-content: center; gap: 7px; padding: 2px 0 0; }
.stripe { position: absolute; width: 30px; height: 6px; left: 135px; top: 43px; background: #ffe09a; transform: rotate(45deg); }
.choose { position: absolute; left: 30px; top: 43px; width: 97px; height: 49px; border: 1px solid #989898; border-radius: 1px; background: linear-gradient(#f5f5f5, #dcdcdc); color: #000; padding: 0; white-space: nowrap; }
.label-n { height: 32px; line-height: 26px; }
.label-e { height: 48px; line-height: 58px; }
.mark { height: 32px; line-height: 24px; padding-left: 0; }
input { display: block; font: inherit; font-stretch: inherit; color: #000; outline: 0; }
.field { width: 442px; height: 38px; border: 1px solid #c9d0d8; border-radius: 4px; background: #fdfdbe; padding: 0 12px; }
.right-col { width: 473px; padding: 15px 15px 0; }
.mon-row { height: 38px; display: flex; justify-content: space-between; align-items: center; padding-right: 8px; }
.grey { border: 0; border-radius: 4px; background: #f3f4f7; height: 38px; padding: 0 9px; width: 120px; }
.lat, .lng { width: 133px; }
.lng { margin: 18px 0 18px 7px; }
.map { position: relative; width: 443px; height: 400px; overflow: hidden; }
.map-art .labels text { font-size: 13px; fill: #555; paint-order: stroke; stroke: #fff; stroke-width: 2px; stroke-opacity: .7; }
.map-art .labels .minor { font-size: 12px; fill: #747474; }
.map-art .labels .city { font-size: 16px; font-weight: 500; fill: #444; }
.shield-text text { font-size: 9.500px; font-weight: 500; fill: #444; }
.logo text { font-size: 21px; font-weight: 500; paint-order: stroke; stroke: #fff; stroke-width: 2px; stroke-opacity: .8; }
.credit text { font-family: "Open Sans", "Noto Sans", sans-serif; font-size: 9.500px; fill: #555; }
.maptype { position: absolute; left: 10px; top: 10px; display: flex; height: 40px; background: #fff; border-radius: 2px; box-shadow: 0 1px 4px rgba(0,0,0,.3); font: 18px/40px Roboto, sans-serif; color: #565656; }
.maptype span { width: 99px; text-align: center; }
.maptype .on { width: 70px; color: #000; font-weight: 500; border-right: 1px solid #e3e3e3; }
.ctl { position: absolute; right: 10px; width: 40px; height: 40px; background: #fff; border-radius: 2px; box-shadow: 0 1px 4px rgba(0,0,0,.3); display: flex; flex-direction: column; align-items: center; justify-content: center; }
.full { top: 10px; }
.peg { top: 223px; }
.zoom { top: 295px; height: 81px; gap: 11px; }
.zoom i { width: 30px; height: 1px; background: #e3e3e3; }
.loc-row, .block-row { display: flex; height: 38px; align-items: center; }
.loc-row label { width: 58px; }
.block-row { margin-top: 17px; }
.block-row label { width: 102px; padding-top: 3px; white-space: nowrap; }
.select { display: flex; align-items: center; justify-content: flex-end; padding-right: 5px; }
.select i { border: 4px solid transparent; border-top: 6px solid #000; border-bottom: 0; }
.scrollbar { width: 15px; flex: none; background: #f1f1f1; display: flex; flex-direction: column; align-items: center; padding: 6px 0; }
.up { border: 4px solid transparent; border-bottom-color: #505050; border-top: 0; }
.thumb { width: 11px; height: 389px; background: #c1c1c1; margin-top: 69px; }
.down { border: 4px solid transparent; border-top-color: #505050; border-bottom: 0; margin-top: auto; }
```
